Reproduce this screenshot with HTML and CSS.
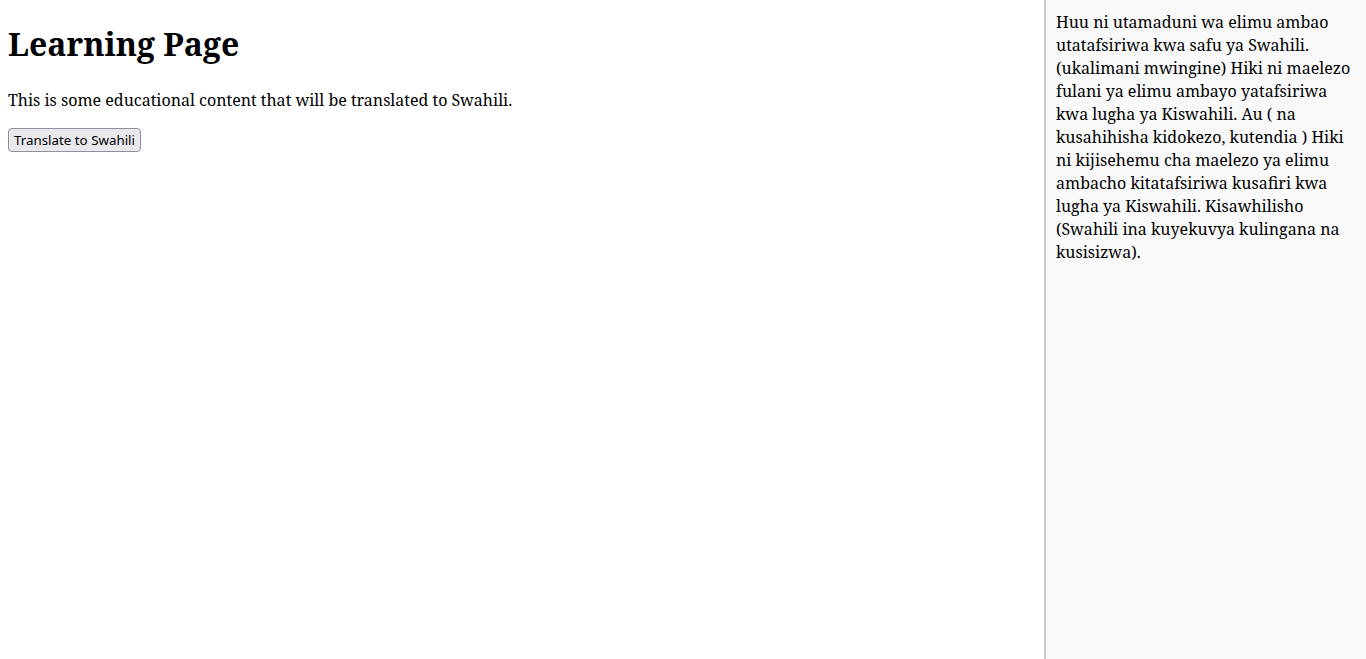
FILE: index.html
```html
<!DOCTYPE html>
<html lang="en">
<head>
<meta charset="utf-8">
<title>Learning Page</title>
<link rel="stylesheet" href="styles.css">
</head>
<body>
<div class="layout">
  <main class="content">
    <h1>Learning Page</h1>
    <p>This is some educational content that will be translated to Swahili.</p>
    <button class="translate-btn">Translate to Swahili</button>
  </main>
  <aside class="sidebar">
    Huu ni utamaduni wa elimu ambao utatafsiriwa kwa safu ya Swahili. (ukalimani mwingine) Hiki ni maelezo fulani ya elimu ambayo yatafsiriwa kwa lugha ya Kiswahili. Au ( na kusahihisha kidokezo, kutendia ) Hiki ni kijisehemu cha maelezo ya elimu ambacho kitatafsiriwa kusafiri kwa lugha ya Kiswahili. Kisawhilisho (Swahili ina kuyekuvya kulingana na kusisizwa).
  </aside>
</div>
</body>
</html>
```
FILE: styles.css
```css
html, body {
  margin: 0;
  height: 100%;
}
body {
  font-family: "Noto Serif", "DejaVu Serif", serif;
  font-size: 16px;
  line-height: 23px;
  color: #000;
}
.layout {
  display: flex;
  height: 100vh;
}
.content {
  flex: 1;
  padding: 0 8px;
  overflow: hidden;
}
.content h1 {
  font-size: 32px;
  line-height: 46px;
  margin: 21px 0 22px;
}
.content p {
  margin: 0 0 16px;
}
.translate-btn {
  font-family: "Noto Sans", "Open Sans", sans-serif;
  font-size: 13.33px;
  line-height: 18px;
  padding: 2px 5px;
  height: 24px;
  color: #000;
  background: #e9e9ed;
  border: 1px solid #8f8f9d;
  border-radius: 4px;
}
.sidebar {
  width: 300px;
  flex: none;
  padding: 11px 10px 10px;
  border-left: 2px solid #ccc;
  background: #f9f9f9;
}
```
